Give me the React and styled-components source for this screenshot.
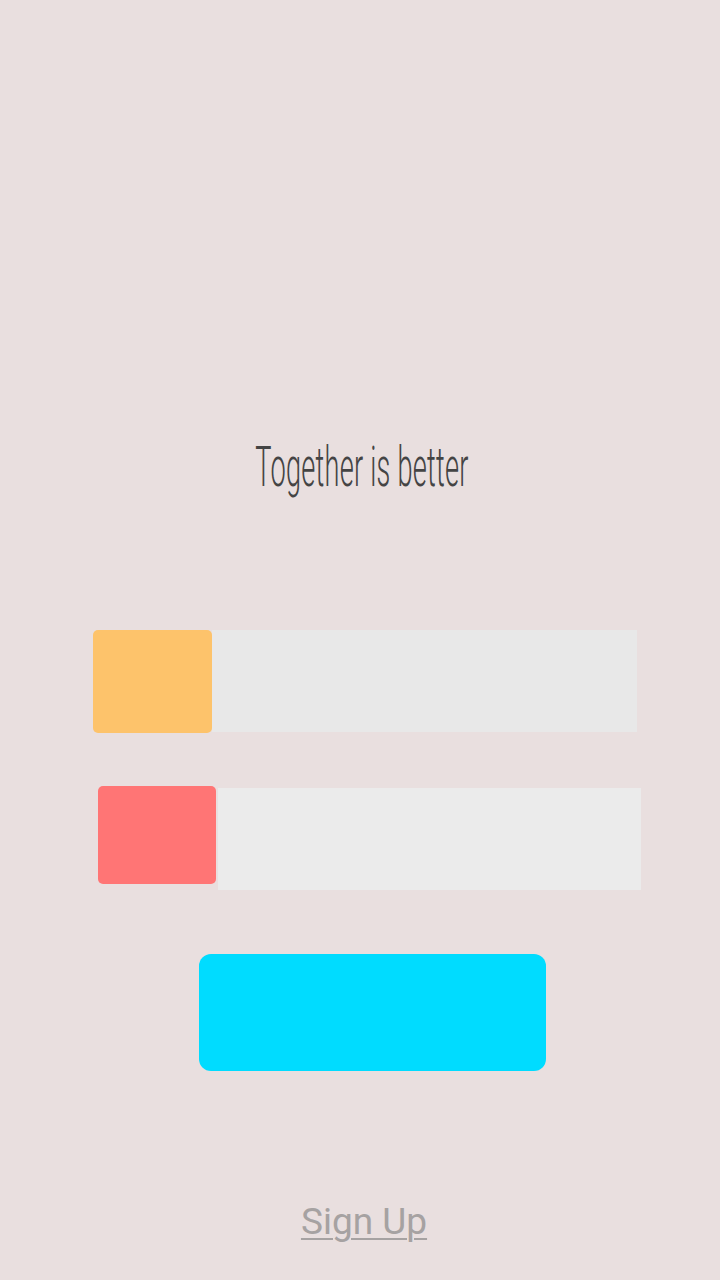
import React from 'react';
import styled, { createGlobalStyle } from 'styled-components';

const GlobalStyle = createGlobalStyle`
  html, body {
    margin: 0;
    padding: 0;
    background: #e9dfdf;
  }
`;

const Page = styled.div`
  display: flex;
  flex-direction: column;
  min-height: 1280px;
  padding-top: 437px;
  box-sizing: border-box;
  background: #e9dfdf;
`;

const Title = styled.h1`
  margin: 0;
  height: 60px;
  display: flex;
  justify-content: center;
  font-family: Roboto, 'Liberation Sans', sans-serif;
  font-weight: 300;
  font-size: 56px;
  line-height: 60px;
  color: #444444;
  letter-spacing: 0.5px;

  span {
    display: inline-block;
    transform: scaleX(0.485);
    white-space: nowrap;
    margin-left: 4px;
  }
`;

const Row = styled.div`
  display: flex;
  align-items: flex-start;
  margin-left: ${p => p.$left}px;
  margin-top: ${p => p.$top}px;
`;

const Swatch = styled.div`
  width: ${p => p.$w}px;
  height: ${p => p.$h}px;
  border-radius: 5px;
  background: ${p => p.$color};
`;

const Field = styled.input`
  width: ${p => p.$w}px;
  height: 102px;
  margin-top: ${p => p.$offset}px;
  margin-left: ${p => p.$gap}px;
  border: none;
  outline: none;
  padding: 0;
  background: ${p => p.$bg};
`;

const Button = styled.button`
  margin-left: 199px;
  margin-top: 64px;
  width: 347px;
  height: 117px;
  border: none;
  border-radius: 12px;
  background: #00dcff;
`;

const SignUp = styled.a`
  align-self: center;
  margin-top: 128px;
  margin-left: 8px;
  font-family: Roboto, 'Liberation Sans', sans-serif;
  font-size: 37px;
  line-height: 46px;
  color: #a6a2a2;
  text-decoration: underline;
  text-underline-offset: 4px;
  text-decoration-thickness: 2px;
`;

const App = () => (
  <Page>
    <GlobalStyle />
    <Title><span>Together is better</span></Title>
    <Row $left={93} $top={133}>
      <Swatch $w={119} $h={103} $color="#fdc36b" />
      <Field $w={425} $offset={0} $gap={0} $bg="#e8e8e8" />
    </Row>
    <Row $left={98} $top={53}>
      <Swatch $w={118} $h={98} $color="#ff7575" />
      <Field $w={423} $offset={2} $gap={2} $bg="#ebebeb" />
    </Row>
    <Button />
    <SignUp>Sign Up</SignUp>
  </Page>
);

export default App;
